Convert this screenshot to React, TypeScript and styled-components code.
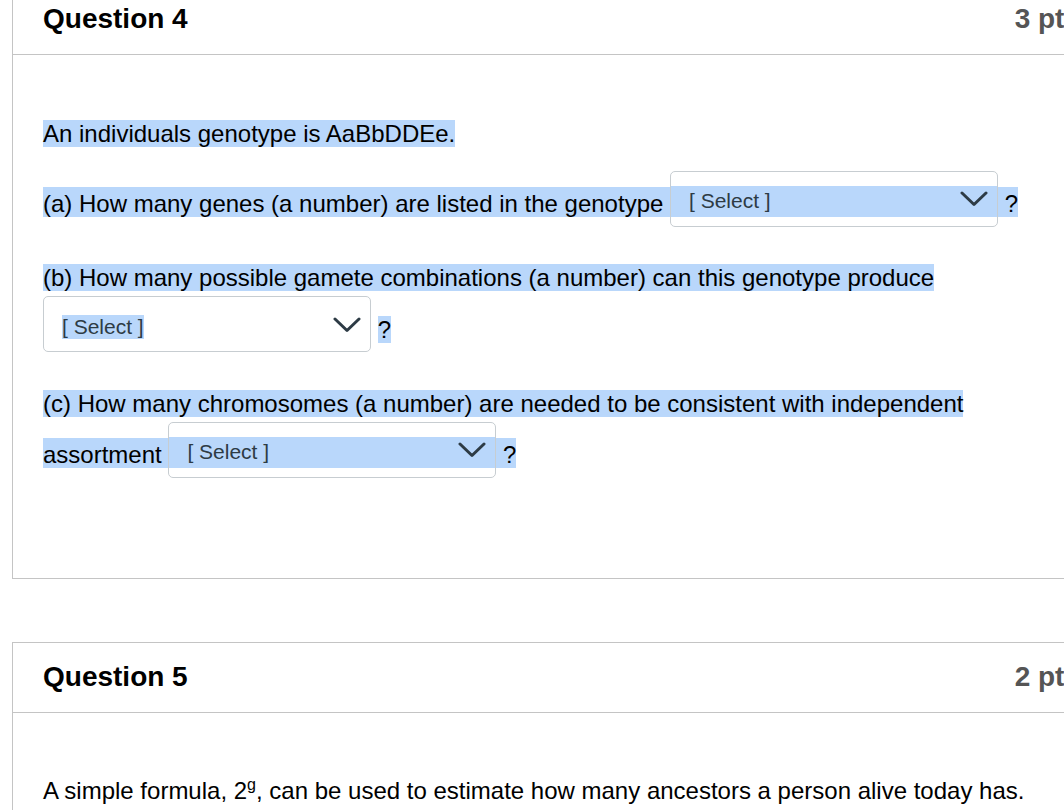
import React from "react";
import styled, { createGlobalStyle, css } from "styled-components";

const GlobalStyle = createGlobalStyle`
  html, body {
    margin: 0;
    padding: 0;
    background: #ffffff;
    overflow: hidden;
  }
  body {
    font-family: "Liberation Sans", Arial, Helvetica, sans-serif;
    color: #000000;
  }
`;

const HIGHLIGHT = "#b9d7fb";

const Page = styled.div`
  display: flex;
  flex-direction: column;
  width: 1099px;
  margin-left: 12px;
`;

const QuestionCard = styled.section<{ $offset: number }>`
  border: 1px solid #c4c4c4;
  margin-top: ${(p) => p.$offset}px;
  background: #ffffff;
`;

const CardHeader = styled.header`
  display: flex;
  justify-content: space-between;
  align-items: center;
  padding: 18px 30px 19px;
  border-bottom: 1px solid #c4c4c4;
`;

const Title = styled.h2`
  margin: 0;
  font-size: 28px;
  line-height: 32px;
  font-weight: 700;
  color: #000000;
`;

const Points = styled.span`
  font-size: 28px;
  line-height: 32px;
  font-weight: 700;
  color: #555555;
  white-space: nowrap;
`;

const CardBody = styled.div<{ $top: number; $bottom: number }>`
  padding: ${(p) => p.$top}px 30px ${(p) => p.$bottom}px;
`;

const Para = styled.p`
  margin: 0 0 18.5px;
  font-size: 24px;
  line-height: 36px;
  color: #000000;
`;

const Mark = styled.span<{ $tall?: boolean }>`
  background: ${HIGHLIGHT};
  ${(p) =>
    p.$tall &&
    css`
      padding-top: 3px;
    `}
`;

const Dropdown = styled.span<{ $band?: boolean }>`
  display: inline-flex;
  align-items: center;
  justify-content: space-between;
  box-sizing: border-box;
  width: 328px;
  height: 56px;
  margin-bottom: 15px;
  padding: 5px 9px 0 18px;
  border: 1px solid #c7cdd1;
  border-radius: 5px;
  vertical-align: middle;
  font-size: 21px;
  line-height: 24px;
  color: #2d3b45;
  background: ${(p) =>
    p.$band
      ? `linear-gradient(to bottom, transparent 0, transparent 15px, ${HIGHLIGHT} 15px, ${HIGHLIGHT} 46px, transparent 46px)`
      : "#ffffff"};
  background-origin: border-box;
`;

const DropdownLabel = styled.span<{ $marked?: boolean }>`
  white-space: nowrap;
  ${(p) =>
    p.$marked &&
    css`
      background: ${HIGHLIGHT};
    `}
`;

const ChevronIcon = styled.svg`
  flex: none;
  display: block;
  margin-bottom: 4px;
`;

const Sup = styled.sup`
  font-size: 16px;
  line-height: 0;
  vertical-align: 9px;
`;

function Chevron() {
  return (
    <ChevronIcon width="28" height="16" viewBox="0 0 28 16" aria-hidden="true">
      <polyline
        points="2,2 14,13.5 26,2"
        fill="none"
        stroke="#2d3b45"
        strokeWidth="3"
        strokeLinecap="round"
        strokeLinejoin="round"
      />
    </ChevronIcon>
  );
}

function Select({ band, marked }: { band?: boolean; marked?: boolean }) {
  return (
    <Dropdown $band={band} role="combobox" aria-label="Select">
      <DropdownLabel $marked={marked}>[ Select ]</DropdownLabel>
      <Chevron />
    </Dropdown>
  );
}

export default function App() {
  return (
    <>
      <GlobalStyle />
      <Page>
        <QuestionCard $offset={-16}>
          <CardHeader>
            <Title>Question 4</Title>
            <Points>3 pts</Points>
          </CardHeader>
          <CardBody $top={61} $bottom={67}>
            <Para>
              <Mark>An individuals genotype is AaBbDDEe.</Mark>
            </Para>
            <Para>
              <Mark $tall>
                (a) How many genes (a number) are listed in the genotype <Select band /> ?
              </Mark>
            </Para>
            <Para>
              <Mark>(b) How many possible gamete combinations (a number) can this genotype produce</Mark>{" "}
              <Select marked /> <Mark>?</Mark>
            </Para>
            <Para>
              <Mark>(c) How many chromosomes (a number) are needed to be consistent with independent</Mark>{" "}
              <Mark $tall>
                assortment <Select band /> ?
              </Mark>
            </Para>
          </CardBody>
        </QuestionCard>
        <QuestionCard $offset={63}>
          <CardHeader>
            <Title>Question 5</Title>
            <Points>2 pts</Points>
          </CardHeader>
          <CardBody $top={60} $bottom={60}>
            <Para>
              A simple formula, 2<Sup>g</Sup>, can be used to estimate how many ancestors a person alive today has.
            </Para>
          </CardBody>
        </QuestionCard>
      </Page>
    </>
  );
}
